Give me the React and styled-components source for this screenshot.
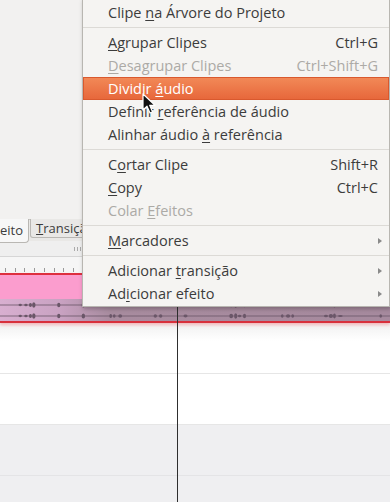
import React from 'react';
import styled, { createGlobalStyle } from 'styled-components';

const GlobalStyle = createGlobalStyle`
    html, body {
        margin: 0;
        padding: 0;
        background: #f2f1f0;
    }
    body {
        font-family: "Open Sans", "DejaVu Sans", sans-serif;
    }
`;

const menuItems = [
    { label: 'Clipe na Árvore do Projeto', key: 6 },
    { sep: true },
    { label: 'Agrupar Clipes', key: 0, shortcut: 'Ctrl+G' },
    { label: 'Desagrupar Clipes', key: 0, shortcut: 'Ctrl+Shift+G', disabled: true },
    { label: 'Dividir áudio', key: 8, active: true },
    { label: 'Definir referência de áudio', key: 8 },
    { label: 'Alinhar áudio à referência', key: 14 },
    { sep: true },
    { label: 'Cortar Clipe', key: 1, shortcut: 'Shift+R' },
    { label: 'Copy', key: 0, shortcut: 'Ctrl+C' },
    { label: 'Colar Efeitos', key: 6, disabled: true },
    { sep: true },
    { label: 'Marcadores', key: 0, submenu: true },
    { sep: true },
    { label: 'Adicionar transição', key: 10, submenu: true },
    { label: 'Adicionar efeito', key: 2, submenu: true },
];

function Mnemonic({ text, index }) {
    return (
        <>
            {text.slice(0, index)}
            <u>{text[index]}</u>
            {text.slice(index + 1)}
        </>
    );
}

// cheap deterministic random so the waveform is the same every run
function rng(seed) {
    let s = seed;
    return () => {
        s = (s * 9301 + 49297) % 233280;
        return s / 233280;
    };
}

function Waveform({ seed, y }) {
    const r = rng(seed);
    const blobs = [];
    let x = 0;
    while (x < 390) {
        x += 6 + r() * 16;
        const count = 1 + Math.floor(r() * 4);
        for (let i = 0; i < count && x < 390; i++) {
            const h = 1 + r() * 1.8;
            blobs.push(<ellipse key={`${x}-${i}`} cx={x} cy={y} rx={1.3 + r()} ry={h} />);
            x += 3 + r() * 3;
        }
        x += r() * 22;
    }
    return (
        <g fill="#6a5668">
            <rect x="0" y={y - 0.4} width="390" height="0.8" />
            {blobs}
        </g>
    );
}

function App() {
    const ticks = [];
    for (let x = 5; x < 390; x += 9.7) ticks.push(<Tick key={x} style={{ left: x }} />);

    return (
        <Page>
            <GlobalStyle />
            <TopArea />
            <TabBar>
                <Tab $active>eito</Tab>
                <Tab>
                    <Mnemonic text="Transição" index={0} />
                </Tab>
            </TabBar>
            <ToolStrip>
                <Grip />
            </ToolStrip>
            <Ruler>{ticks}</Ruler>
            <ClipTrack>
                <ClipTop />
                <ClipAudio>
                    <svg width="390" height="22" viewBox="0 0 390 22">
                        <Waveform seed={17} y={6} />
                        <Waveform seed={17} y={17} />
                    </svg>
                </ClipAudio>
            </ClipTrack>
            <TrackRow $shadow />
            <TrackRow />
            <TrackRow $gray />
            <TrackRow $gray />

            <Playhead />

            <Menu>
                {menuItems.map((item, i) =>
                    item.sep ? (
                        <Separator key={i} />
                    ) : (
                        <MenuItem key={i} $active={item.active} $disabled={item.disabled}>
                            <span>
                                <Mnemonic text={item.label} index={item.key} />
                            </span>
                            {item.shortcut && <Shortcut>{item.shortcut}</Shortcut>}
                            {item.submenu && <Arrow />}
                        </MenuItem>
                    )
                )}
            </Menu>

            <Cursor width="16" height="22" viewBox="0 0 16 22">
                <path
                    d="M1 1 L1 17 L5 13.2 L8 20 L10.6 18.9 L7.7 12.3 L13 12.3 Z"
                    fill="#111"
                    stroke="#fff"
                    strokeWidth="1.2"
                    strokeLinejoin="round"
                />
            </Cursor>
        </Page>
    );
}

export default App;

const Page = styled.div`
    position: relative;
    width: 390px;
    height: 502px;
    overflow: hidden;
    display: flex;
    flex-direction: column;
    background: #f2f1f0;

    & > * {
        flex-shrink: 0;
    }
`;

const TopArea = styled.div`
    height: 219px;
    background: #f2f1f0;
`;

const TabBar = styled.div`
    height: 21px;
    display: flex;
    align-items: flex-start;
    border-top: 1px solid #c9c7c3;
    background: #e9e8e6;
    position: relative;
    z-index: 1;
`;

const Tab = styled.div`
    font-size: 13px;
    color: #3c3c3c;
    padding: 0 5px;
    margin-top: -1px;
    border: 1px solid #b9b7b3;
    border-top: none;
    background: ${(p) => (p.$active ? '#f7f7f7' : '#e9e8e6')};
    height: ${(p) => (p.$active ? '23px' : '18px')};
    line-height: ${(p) => (p.$active ? '22px' : '18px')};
    border-radius: 0 0 ${(p) => (p.$active ? '4px 4px' : '3px 3px')};
    margin-left: ${(p) => (p.$active ? '-6px' : '1px')};
`;

const ToolStrip = styled.div`
    height: 15px;
    background: #efefef;
    border-bottom: 1px solid #d6d6d6;
    display: flex;
    align-items: center;
    padding-left: 74px;
`;

const Grip = styled.div`
    width: 7px;
    height: 4px;
    background: repeating-linear-gradient(90deg, #aaa 0 1px, transparent 1px 3px);
`;

const Ruler = styled.div`
    position: relative;
    height: 16px;
    background: #f6f6f6;
`;

const Tick = styled.span`
    position: absolute;
    bottom: 1px;
    width: 1px;
    height: 4px;
    background: #9a9a9a;
`;

const ClipTrack = styled.div`
    display: flex;
    flex-direction: column;
    border-top: 2px solid #de2f3f;
    border-bottom: 2px solid #d8303c;
    box-shadow: 0 2px 3px rgba(240, 80, 90, 0.35);
    position: relative;
    z-index: 1;
`;

const ClipTop = styled.div`
    height: 24px;
    background: #fb9dce;
`;

const ClipAudio = styled.div`
    height: 22px;
    background: linear-gradient(90deg, #d8afd0 0px, #c9a2c2 60px, #a88c9f 110px, #a68a9e 390px);

    svg {
        display: block;
    }
`;

const TrackRow = styled.div`
    height: 50px;
    background: ${(p) => (p.$gray ? '#efeff1' : '#ffffff')};
    border-bottom: 1px solid ${(p) => (p.$gray ? '#e4e4e6' : '#e6e6e6')};
    ${(p) => p.$shadow && 'background: linear-gradient(#f0f0f0, #ffffff 18px);'}
`;

const Playhead = styled.div`
    position: absolute;
    left: 177px;
    top: 256px;
    bottom: 0;
    width: 1px;
    background: #2e2e2e;
    z-index: 2;
`;

const Menu = styled.div`
    position: absolute;
    left: 82px;
    top: -2px;
    width: 306px;
    padding: 2px 0 1px;
    background: #f5f4f2;
    border: 1px solid #b8b6b1;
    box-shadow: 1px 2px 4px rgba(0, 0, 0, 0.25);
    z-index: 5;
`;

const MenuItem = styled.div`
    height: 23px;
    display: flex;
    align-items: center;
    padding: 0 11px 0 25px;
    font-size: 14.5px;
    color: ${(p) => (p.$active ? '#ffffff' : p.$disabled ? '#acaaa6' : '#3c3c3c')};
    background: ${(p) => (p.$active ? 'linear-gradient(#f28a58, #e7663a)' : 'transparent')};
    box-shadow: ${(p) => (p.$active ? 'inset 0 0 0 1px #d9592e' : 'none')};
    white-space: nowrap;

    span:first-child {
        flex: 1;
    }

    u {
        text-decoration-thickness: 1px;
        text-underline-offset: 2px;
    }
`;

const Shortcut = styled.span`
    color: inherit;
`;

const Arrow = styled.span`
    width: 0;
    height: 0;
    margin-right: -4px;
    border-top: 3.5px solid transparent;
    border-bottom: 3.5px solid transparent;
    border-left: 4px solid #8a8a8a;
`;

const Separator = styled.div`
    height: 1px;
    margin: 3px 0;
    background: #dcdad6;
`;

const Cursor = styled.svg`
    position: absolute;
    left: 142px;
    top: 93px;
    z-index: 6;
`;
